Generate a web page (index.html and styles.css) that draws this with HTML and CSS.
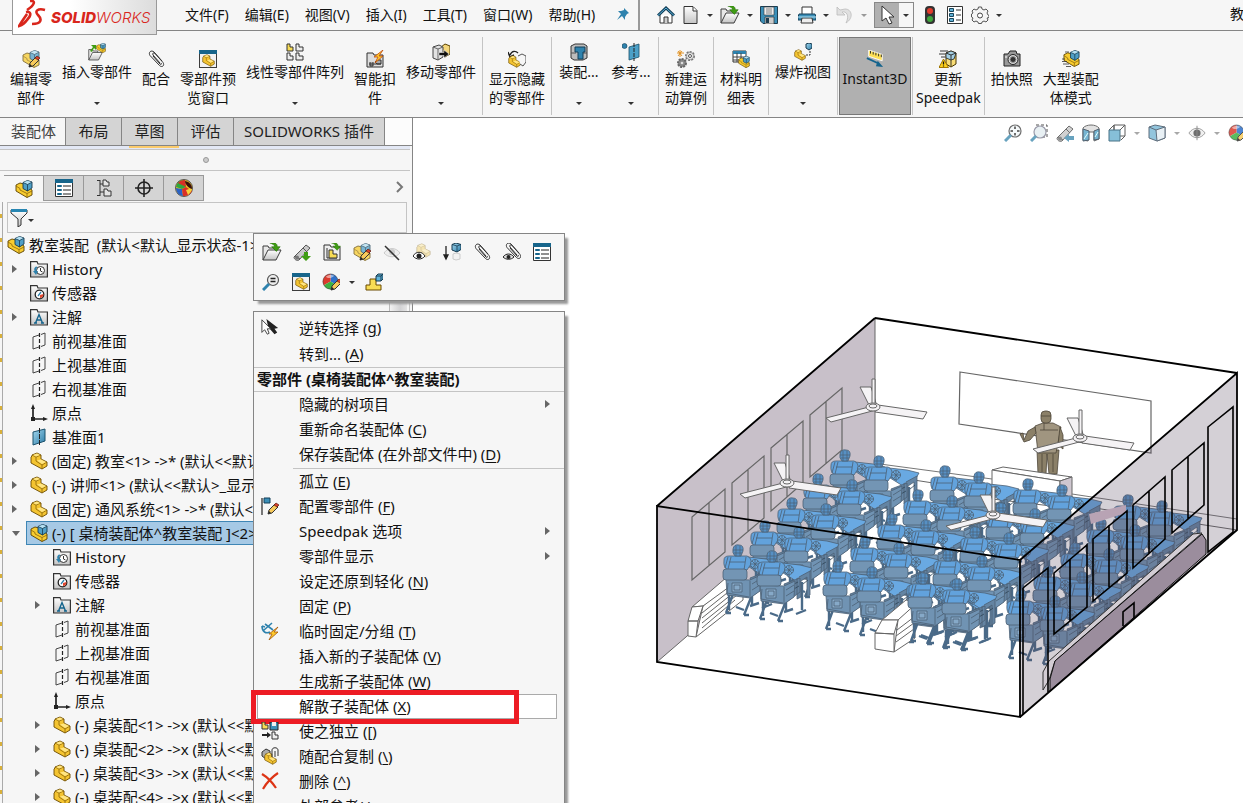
FILE: index.html
```
<!DOCTYPE html>
<html lang="zh-CN">
<head>
<meta charset="utf-8">
<title>SOLIDWORKS</title>
<link rel="stylesheet" href="styles.css">
</head>
<body>
<svg class="defs" aria-hidden="true">
  <defs>
    <linearGradient id="gBlue" x1="0" y1="0" x2="1" y2="1"><stop offset="0" stop-color="#a5d9f0"/><stop offset="1" stop-color="#2a7ba6"/></linearGradient>
    <linearGradient id="gGrey" x1="0" y1="0" x2="0" y2="1"><stop offset="0" stop-color="#fff"/><stop offset="1" stop-color="#c4c4c4"/></linearGradient>
  </defs>
  <symbol id="part" viewBox="0 0 18 18"><path d="M1 5 2 4V3l5-2 4 2v4l6 3v4l-5 3L1 11z" fill="#f4c431" stroke="#6b4b00" stroke-width=".9"/><path d="M2 3l4 2 5-2M6 5v4l6 4 5-3M12 13v4" fill="none" stroke="#8a6508" stroke-width=".8"/><path d="M3 3l4-1.500L10 3 6 4.500zM7 8.500l4-1 5 2.500-4 2z" fill="#ffe583"/></symbol>
  <symbol id="asm" viewBox="0 0 18 18"><path d="M1 7V5l4-2 4 1 8 6v5l-5 2.500L1 11z" fill="#f8cc2f" stroke="#5b4200" stroke-width=".9"/><path d="M1 6l4 2.500V10l7 3.500v4M12 13.500l5-2.500" fill="none" stroke="#8a6508" stroke-width=".8"/><path d="M8 2.500 12.500.5 17 2v6l-4.500 3L8 8.500z" fill="#4f9fc6" stroke="#173b50" stroke-width=".9"/><path d="M8 2.500 12.500.8 17 2.200 12.500 4.500z" fill="#b5e0f2"/><path d="M8 2.500l4.500 2 4.500-2.300M12.500 4.500V11" fill="none" stroke="#173b50" stroke-width=".8"/></symbol>
  <symbol id="pencil" viewBox="0 0 18 18"><path d="M7 17l1-4 6-6 3 3-6 6z" fill="#f7c95a" stroke="#333"/><path d="M13 8l2-2 3 2-2 2z" fill="#d8412c" stroke="#5a1b10" stroke-width=".7"/><path d="M7 17l1-3 2 2z" fill="#222"/></symbol>
  <symbol id="editasm" viewBox="0 0 18 18"><g opacity=".75"><use href="#asm"/></g><use href="#pencil"/></symbol>
  <symbol id="greenarrow" viewBox="0 0 18 18"><path d="M4 1c4-1 8 0 8 4h3l-4 5-5-5h3c0-2-2-3-5-4z" fill="#3f9d13" stroke="#226a05" stroke-width=".6"/></symbol>
  <symbol id="folder" viewBox="0 0 20 18"><path d="M1 17V3h5l1 2h6v4" fill="#e8e8e8" stroke="#3c3c3c"/><path d="M1 17 6 7h13l-5 10z" fill="url(#gGrey)" stroke="#3c3c3c"/></symbol>
  <symbol id="open" viewBox="0 0 20 18"><use href="#folder" width="20" height="18"/><use href="#greenarrow" x="4" width="17" height="17" y="-1"/></symbol>
  <symbol id="insert" viewBox="0 0 18 18"><use href="#folder" x="0" y="4" width="15" height="14"/><use href="#asm" x="8" y="0" width="10" height="10"/><path d="M2 8 5 4 3 2h5v5L6 5 4 9z" fill="#3f9d13"/></symbol>
  <symbol id="clip" viewBox="0 0 18 18"><path d="M13 13 6 5C5 3 7 2 8.500 4l7.500 8.500c2 3-1 5.500-3.500 3L3 5.500C1 2.500 4-.5 7 2l8 9M6 6l7 8c1 1 2 0 1-1" fill="none" stroke="#333"/></symbol>
  <symbol id="window" viewBox="0 0 18 18"><rect x=".5" y=".5" width="17" height="17" fill="#f2f2f2" stroke="#3c3c3c"/><path d="M0 0h18v4H0z" fill="#17658b"/><use href="#part" x="3" y="4" width="13" height="13"/></symbol>
  <symbol id="pattern" viewBox="0 0 18 18"><g fill="#eee" stroke="#333"><path d="M1 1h3v3h3v4H1z" fill="#f8dc55"/><path d="M10 1h3v3h4v4h-7zM1 10h3v3h3v4H1zM10 10h3v3h4v4h-7z"/></g></symbol>
  <symbol id="smart" viewBox="0 0 18 18"><path d="M1 17V3h6l1 2h9v12z" fill="#ddd" stroke="#333"/><path d="M3 14h12M4 12v4h3v-4M9 12l2-2h4v4h-4z" fill="#aaa" stroke="#333"/><path d="M17 0 8 7h4l-3 6 8-7h-4z" fill="#ffca2b" stroke="#c24a0a" stroke-width=".8"/></symbol>
  <symbol id="move" viewBox="0 0 18 18"><path d="M9 4l4-3 5 2v8l-5 3z" fill="#f4d67a" stroke="#5b4200"/><path d="M1 4l6-2 4 2v10l-5 3-5-2z" fill="#e2e2e2" stroke="#444"/><path d="M1 4l5 2 5-2M6 6v11" fill="none" stroke="#666"/><path d="M7 9.500h5V7l5 4-5 4v-2.500H7z" fill="#111" stroke="#fff" stroke-width=".5"/></symbol>
  <symbol id="showhide" viewBox="0 0 18 18"><path d="M2 5c2-5 6-4 8-2M0 2l2 5 4-2" fill="none" stroke="#222" stroke-width="1.400"/><use href="#part" x="0" y="5" width="13" height="13"/><path d="M10 6l4-2 4 2v6l-3 4-3-2" fill="#f6f6f6" stroke="#555"/></symbol>
  <symbol id="feature" viewBox="0 0 18 18"><path d="M1 3l4-2h9l3 2v12l-4 2H4l-3-2z" fill="#bcbcbc" stroke="#333"/><path d="M1 10h5M12 10h5" stroke="#555"/><path d="M5 4h10v5h-2v7H8V9H5z" fill="#2e82ad" stroke="#123f58"/></symbol>
  <symbol id="refgeo" viewBox="0 0 18 18"><circle cx="2.500" cy="3" r="2.500" fill="#2e82ad" stroke="#123f58" stroke-width=".6"/><path d="M7 4l10-3v13L7 17z" fill="#4ba0c8" stroke="#1b506b" stroke-width=".8"/><path d="M12 0v18" stroke="#222" stroke-dasharray="4 1"/></symbol>
  <symbol id="gears" viewBox="0 0 18 18"><circle cx="13" cy="6" r="4" fill="#eee" stroke="#777" stroke-dasharray="2 1" stroke-width="2"/><circle cx="13" cy="6" r="3.500" fill="#eee" stroke="#777" stroke-width=".6"/><circle cx="13" cy="6" r="1.500" fill="#fff" stroke="#555"/><circle cx="5" cy="13" r="4" fill="#888" stroke="#666" stroke-dasharray="2 1" stroke-width="2"/><circle cx="5" cy="13" r="1.300" fill="#ddd"/><path d="M3 0v7M0 3h7M1 1l4 5M5 1 1 6" stroke="#e08a12" stroke-width=".9"/></symbol>
  <symbol id="bom" viewBox="0 0 18 18"><path d="M1 1h13v11H1z" fill="#fff" stroke="#333"/><path d="M1 1h13v3H1z" fill="#2e82ad"/><path d="M1 7h13M1 10h13M5 3v9M9 3v9" stroke="#444"/><use href="#asm" x="6" y="6" width="12" height="12"/></symbol>
  <symbol id="explode" viewBox="0 0 18 18"><use href="#part" x="0" y="6" width="12" height="12"/><path d="M12 1l3-1 3 1v4l-3 2-3-2z" fill="url(#gBlue)" stroke="#173b50"/><path d="M16 8v4h-4" stroke="#333" stroke-dasharray="2 1" fill="none"/></symbol>
  <symbol id="ruler" viewBox="0 0 20 20"><path d="M3 0l15 5v7L3 7z" fill="#ffe056" stroke="#fff"/><path d="M5 1v3M8 2v3M11 3v3M14 4v3M17 5v3" stroke="#222"/><path d="M1 9l13 6" stroke="#15648d" stroke-width="2"/><path d="M13 12l6 7-8-1z" fill="#15648d"/></symbol>
  <symbol id="speedpak" viewBox="0 0 18 18"><path d="M7 3l5-2 5 2v11l-5 3-5-3z" fill="#f8dc75" stroke="#443200"/><path d="M7 3l5-2 5 2-2 6-3 1-5-2z" fill="#a5d0e4" stroke="#222" stroke-width=".8"/><path d="M12 5v11M7 3l5 2 5-2M1 1h8M0 4h6M2 7h4" stroke="#222" fill="none" stroke-width=".9"/><path d="M0 17.500 4.500 9l5 8.500z" fill="#ffd21c" stroke="#a07600"/><path d="M4.500 11.500v3M4.500 15.500v1" stroke="#111" stroke-width="1.300"/></symbol>
  <symbol id="camera" viewBox="0 0 18 18"><path d="M1 4h4l2-3h6l1 3h3v12H1z" fill="#999" stroke="#222"/><circle cx="10" cy="9.500" r="5" fill="#ddd" stroke="#222"/><circle cx="10" cy="9.500" r="3" fill="#333" stroke="#999"/><path d="M2 7h2" stroke="#fff"/></symbol>
  <symbol id="largeasm" viewBox="0 0 18 18"><use href="#asm" x="1" width="17" height="17"/><path d="M0 9h3M0 11.500h5M1 14h6M4 16.500h5M3 2h4" stroke="#333" stroke-width=".8"/></symbol>
  <symbol id="history" viewBox="0 0 18 18"><path d="M.6 17V1.600H7L8 4h9.400v13z" fill="url(#gGrey)" stroke="#333" stroke-width="1.200"/><circle cx="10.500" cy="10.500" r="4" fill="#fff" stroke="#333"/><path d="M10.500 8v3l2 1" fill="none" stroke="#333"/><path d="M6 6.500c-2 1-2 3-1.500 4.500H3l3 4 2-4H6.500c-.5-2 0-3 1-4z" fill="#2e82ad"/></symbol>
  <symbol id="sensor" viewBox="0 0 18 18"><path d="M.6 17V1.600H7L8 4h9.400v13z" fill="url(#gGrey)" stroke="#333" stroke-width="1.200"/><circle cx="9.500" cy="10.500" r="4.300" fill="#fff" stroke="#222" stroke-width="1.300"/><path d="M8 12l3-4" stroke="#2e82ad" fill="none" stroke-width="1.300"/><path d="M10 11l3.500-1c0 2-1 4-3.500 4z" fill="#e0472f"/></symbol>
  <symbol id="note" viewBox="0 0 18 18"><path d="M.6 17V1.600H7L8 4h9.400v13z" fill="url(#gGrey)" stroke="#333" stroke-width="1.200"/><path d="M5.500 15 9 6.500l3.500 8.500M7 12h4.500M4 15h3M11 15h3" fill="none" stroke="#15648d" stroke-width="1.400"/></symbol>
  <symbol id="plane" viewBox="0 0 18 18"><path d="M9 3 3 5v12l6-2M11 2.500 15 1v12l-4 1.500" fill="none" stroke="#444"/><path d="M9.500 1v17" stroke="#222" stroke-width="1.200" stroke-dasharray="4 2"/></symbol>
  <symbol id="plane1" viewBox="0 0 18 18"><path d="M3 4l12-3v12L3 17z" fill="url(#gBlue)" stroke="#1b506b"/><path d="M9.500 0v18" stroke="#222" stroke-dasharray="5 1"/></symbol>
  <symbol id="origin" viewBox="0 0 18 18"><path d="M3 3v12h11" fill="none" stroke="#222" stroke-width="1.700"/><path d="M3 0l2 5H1zM18 15l-5 2v-4zM1 13h4v4H1z" fill="#222"/></symbol>
  <symbol id="list" viewBox="0 0 18 18"><path d="M.500.500h17v17H.500z" fill="#fff" stroke="#333"/><path d="M0 0h18v4H0z" fill="#17658b"/><path d="M2.500 6.500h4v1h-4zM2.500 10.500h4v1h-4zM2.500 14.500h4v1h-4z" fill="#9dd" stroke="#17658b"/><path d="M8 7h8M8 11h8M8 15h8" stroke="#222" stroke-width="1.100"/></symbol>
  <symbol id="options" viewBox="0 0 18 18"><path d="M1.500.5h15v17h-15z" fill="#fff" stroke="#333"/><path d="M3.500 2.500h4v3h-4zM3.500 7.500h4v3h-4zM3.500 12.500h4v3h-4z" fill="#5fb0d6" stroke="#17455b"/><path d="M10 4h5M10 9h5M10 14h5" stroke="#333"/></symbol>
  <symbol id="config" viewBox="0 0 18 18"><path d="M5 1v16M5 1.500H2M5 16.500H2M5 5h4M5 13h4" stroke="#333" fill="none"/><path d="M8 1h3l1 2h2v4H8zM9 10h3l1 2h3v5H9z" fill="#e4e4e4" stroke="#333"/></symbol>
  <symbol id="target" viewBox="0 0 18 18"><circle cx="9" cy="9" r="6" fill="none" stroke="#222" stroke-width="1.600"/><path d="M9 0v18M0 9h18" stroke="#222" stroke-width="1.600"/></symbol>
  <symbol id="ball" viewBox="0 0 18 18"><path d="M9 9V1a8 8 0 0 1 7 12z" fill="#2f70c9"/><path d="M9 9V1a8 8 0 0 0-7 12z" fill="#db3b2e"/><path d="M9 9l7 4a8 8 0 0 1-14 0z" fill="#3db144"/><path d="M4 4c3-3 7-2 9-1-3 3-7 3-9 1z" fill="#fff" opacity=".5"/><circle cx="9" cy="9" r="8" fill="none" stroke="#444" stroke-width=".6"/></symbol>
  <symbol id="display" viewBox="0 0 18 18"><circle cx="9" cy="9" r="8.500" fill="#f2c521" stroke="#555"/><path d="M1 8a8 8 0 0 1 8-7l2 7-4 2z" fill="#2fa83c"/><path d="M3 4a8 8 0 0 1 7-3l1 7z" fill="#d92f25"/><path d="M1 9l6 1 1 7c-4 0-7-4-7-8z" fill="#2a62c4"/><path d="M7 10l4-2 6 4c-2 4-5 5-9 5z" fill="#d92f25"/><path d="M11 11l6-2c0 3-2 5-4 7z" fill="#f6d13a"/><path d="M10 2c5 1 7 4 7 8-4-1-7-5-7-8z" fill="#3a0f0c"/></symbol>
  <symbol id="appear" viewBox="0 0 18 18"><use href="#ball" width="17" height="17"/><use href="#pencil" x="2"/></symbol>
  <symbol id="filter" viewBox="0 0 18 18"><path d="M1 1h16v3l-6 6v6l-3 2v-8L1 4z" fill="url(#gGrey)" stroke="#333"/><path d="M1 0h16v3H1z" fill="#2886b2"/></symbol>
  <symbol id="rcube" viewBox="0 0 18 18"><path d="M1 3l6-2 10 2v11l-8 3-8-3z" fill="#7fbcd8" stroke="#456"/><path d="M8 6l9-3v11l-8 3z" fill="#e4eef4" stroke="#456"/><path d="M1 3l7 3" stroke="#456"/></symbol>
  <symbol id="home" viewBox="0 0 18 18"><path d="M3 9v8h12V9" fill="#fff" stroke="#333"/><path d="M7 17v-6h4v6" fill="#ccc" stroke="#333"/><path d="M1 9.500 9 2l8 7.500" fill="none" stroke="#123f58" stroke-width="3"/><path d="M1 9.500 9 2l8 7.500" fill="none" stroke="#5cb0d8"/></symbol>
  <symbol id="new" viewBox="0 0 18 18"><path d="M2 .5h9l4 4v13H2z" fill="url(#gGrey)" stroke="#333"/><path d="M11 1v4h4" fill="#fff" stroke="#333"/></symbol>
  <symbol id="save" viewBox="0 0 18 18"><path d="M.5.5h17v17H3L.5 15z" fill="#3b8fb8" stroke="#1e3e50"/><path d="M4 1h10v8H4z" fill="#eee" stroke="#333" stroke-width=".6"/><path d="M6 3h6M6 5h6M6 7h6" stroke="#555" stroke-width=".7"/><path d="M5 11h9v7H5z" fill="#ccc" stroke="#333" stroke-width=".7"/><path d="M6 12h3v5H6z" fill="#1e3e50"/></symbol>
  <symbol id="print" viewBox="0 0 18 18"><path d="M4 8V1h10v7" fill="#fff" stroke="#333"/><path d="M1 8h16l1 3v3H0v-3z" fill="#3b8fb8" stroke="#123f58"/><path d="M4 12h10l1 5H3z" fill="#eee" stroke="#333"/><path d="M0 11h18" stroke="#b8e0f0"/></symbol>
  <symbol id="undo" viewBox="0 0 18 18"><path d="M1 1v8h8L6 6c4-1 8 3 4 11 8-5 6-14-1-14L4 4z" fill="#e0e0e0" stroke="#bbb" stroke-width=".8"/></symbol>
  <symbol id="cursor" viewBox="0 0 18 20"><path d="M4 1v15l4-3 3 6 3-1-3-6h5z" fill="#fff" stroke="#333"/></symbol>
  <symbol id="light" viewBox="0 0 18 18"><rect x="4" y="0" width="10" height="18" rx="4" fill="#333"/><circle cx="9" cy="5" r="3" fill="#e23b2c"/><circle cx="9" cy="13" r="3" fill="#3fa63c"/></symbol>
  <symbol id="cog" viewBox="0 0 18 18"><path d="M7.500 1h3l.5 2 2 1 2-1 2 2-1 2 1 2 1 .5v2L16 12l1 2-2 2-2-1-2 1-.5 1.500h-3L7 16l-2-1-2 1-2-2 1-2-1.500-1V8L2 7 1 5l2-2 2 1 2-1z" fill="#f4f4f4" stroke="#555"/><circle cx="9" cy="9.500" r="2.500" fill="#fff" stroke="#444"/></symbol>
  <symbol id="pin" viewBox="0 0 14 14"><path d="M8 1l5 5-2 1-2 3v3L6 9l-5 4 4-6-3-3h3l3-1z" fill="#2e82ad"/></symbol>
  <symbol id="zoomfit" viewBox="0 0 18 18"><circle cx="11" cy="7" r="6" fill="#f4f8fa" stroke="#555" stroke-width="1.200"/><path d="M7 11l-6 6" stroke="#4e93b5" stroke-width="3"/><path d="M11 2.500v2.500M11 9v2.500M6.500 7H9M13 7h2.500" stroke="#222" stroke-width="1.500"/></symbol>
  <symbol id="zoomarea" viewBox="0 0 18 18"><path d="M6 1h11v12h-4" fill="none" stroke="#333" stroke-dasharray="3 2"/><circle cx="10" cy="8" r="6" fill="#e4eef2" stroke="#889" stroke-width="1.200"/><path d="M6 12l-5 5" stroke="#4e93b5" stroke-width="3"/></symbol>
  <symbol id="scope" viewBox="0 0 18 18"><path d="M1 14 13 2l4 3L6 17c-3 1-5-1-5-3z" fill="#c9c9c9" stroke="#555"/><path d="M2 13l5 3M10 5l4 4" stroke="#555"/><circle cx="4" cy="14.500" r="2" fill="#777"/></symbol>
  <symbol id="prev" viewBox="0 0 18 18"><use href="#scope"/><path d="M8 14l5-4v2h5v4h-5v2z" fill="#4e93b5"/></symbol>
  <symbol id="goscope" viewBox="0 0 18 18"><use href="#scope"/><path d="M11 9h4v4h3l-5 5-5-5h3z" fill="#3f9d13"/></symbol>
  <symbol id="section" viewBox="0 0 18 18"><path d="M1 4c3-4 13-4 16 0v11l-5 2V8H6v9l-5-1z" fill="#ddd" stroke="#555"/><path d="M1 5l6 2v9l-6 1zM17 5l-5 2v9l5-1z" fill="#5fa9cb" stroke="#345"/><path d="M2 15l4-6M13 13l3-5" stroke="#dff"/></symbol>
  <symbol id="orient" viewBox="0 0 18 18"><path d="M6 1h11v11l-4 4M6 6V1l-5 5M17 1l-5 5M6 1v8M12 12h5" fill="none" stroke="#444"/><path d="M1 6h11v11H1z" fill="#72b5d2" stroke="#2a5a72"/></symbol>
  <symbol id="eye" viewBox="0 0 20 18"><path d="M1 9c5-7 13-7 18 0-5 7-13 7-18 0z" fill="#eee" stroke="#888"/><circle cx="10" cy="9" r="4" fill="#555"/><path d="M10 1v16" stroke="#777"/></symbol>
  <symbol id="eyehide" viewBox="0 0 18 18"><path d="M1 10c4-6 12-6 16 0-4 5-12 5-16 0z" fill="#eee" stroke="#ccc"/><circle cx="9" cy="9" r="3" fill="#ccc"/><path d="M2 3l14 14" stroke="#333" stroke-width="1.500"/></symbol>
  <symbol id="ghost" viewBox="0 0 18 18"><g opacity=".35"><use href="#part" x="3" width="15" height="15"/></g><path d="M0 13c3-5 9-5 12 0-3 4-9 4-12 0z" fill="#fff" stroke="#222"/><circle cx="6" cy="13" r="2.500" fill="#222"/></symbol>
  <symbol id="suppress" viewBox="0 0 18 18"><path d="M3 3v12M1 12l2 4 2-4z" stroke="#222" fill="#222" stroke-width="1.300"/><path d="M9 1.500 13 0l5 1.500v5L14 9 9 7z" fill="url(#gBlue)" stroke="#173b50"/><path d="M9 1.500 14 3l4-1.500M14 3v6" stroke="#173b50" fill="none" stroke-width=".8"/><path d="M10 11l3-1 4 1v5l-4 1-3-1z" fill="#f2f2f2" stroke="#ccc"/></symbol>
  <symbol id="clipeye" viewBox="0 0 18 18"><use href="#clip" x="1" y="-1"/><path d="M0 14c3-4 8-4 11 0-3 3-8 3-11 0z" fill="#ddd" stroke="#222"/><circle cx="5.500" cy="14" r="2" fill="#222"/></symbol>
  <symbol id="copywin" viewBox="0 0 18 18"><path d="M1 2h6l1 2h9v13H1z" fill="#eee" stroke="#333"/><path d="M4 5v10h10" fill="none" stroke="#333"/><path d="M6 7h4v4h4v4H6z" fill="#f8dc55" stroke="#333"/><use href="#greenarrow" x="5" width="15" height="15" y="-1"/></symbol>
  <symbol id="lens" viewBox="0 0 18 18"><circle cx="11" cy="7" r="5.500" fill="#eee" stroke="#555" stroke-width="1.200"/><path d="M7 11l-6 6" stroke="#2e82ad" stroke-width="3"/><path d="M8.500 5.500h5M8.500 8.500h5" stroke="#222" stroke-width="1.500"/></symbol>
  <symbol id="tree3" viewBox="0 0 18 18"><path d="M1 17v-5h4V6h6v6h5v5z" fill="#f8dc55" stroke="#6b4b00"/><path d="M11 3l2-2h5v5l-2 2h-5z" fill="#5fb4da" stroke="#173b50"/><path d="M11 3h5v5M16 3l2-2" fill="none" stroke="#173b50"/></symbol>
  <symbol id="cursors" viewBox="0 0 20 18"><path d="M6 0l13 10-4 1 3 4-3 2-7-8z" fill="#222"/><path d="M1 1v14l3-3 3 5 2-1-2-5h4z" fill="#fff" stroke="#333"/></symbol>
  <symbol id="flag" viewBox="0 0 18 18"><path d="M1 1v17" stroke="#222" stroke-width="1.200"/><path d="M3 1h6v5H3z" fill="#3b8fb8" stroke="#123f58"/><use href="#pencil"/></symbol>
  <symbol id="anchor" viewBox="0 0 18 18"><path d="M1 4c0 6 4 8 8 6M3 8l8-7M1 4l3 1M4 2l8 6" fill="none" stroke="#2e82ad" stroke-width="1.600"/><path d="M17 5 8 12h3l-3 6 9-8h-4z" fill="#ffca2b" stroke="#a55608" stroke-width=".8"/></symbol>
  <symbol id="indep" viewBox="0 0 18 18"><path d="M1 0h3v3h3v4H1z" fill="#f8dc55" stroke="#333"/><path d="M9 0h8v8H9z" fill="#3b8fb8" stroke="#222"/><path d="M11 0h4v4h-4z" fill="#eee"/><path d="M1 13h7" stroke="#222" stroke-width="2"/><path d="M6 10l4 3-4 3z" fill="#222"/><path d="M11 10h3v3h3v4h-6z" fill="#eee" stroke="#333"/></symbol>
  <symbol id="copymate" viewBox="0 0 18 18"><path d="M1 5l4-3 4 2v6l-4 2-4-3z" fill="#aaa" stroke="#333"/><use href="#part" x="3" y="5" width="13" height="13"/><path d="M11 10V3c0-3 6-3 6 0v6M14 10V4" fill="none" stroke="#333"/></symbol>
  <symbol id="del" viewBox="0 0 18 18"><path d="M1 2c5 3 10 8 14 14M17 1C11 5 6 10 2 17" fill="none" stroke="#dd3415" stroke-width="2.200"/></symbol>
</svg>

<header class="titlebar">
  <div class="logo">
    <svg class="ds" viewBox="0 0 28 28" aria-hidden="true"><path d="M12 1c6-1 5 4-3 9M8 12c5-1 6 3 1 8-2 3-5 5-8 6 3-5 6-9 8-12M27 10c-7-2-11 1-7 5 4 4 4 9-6 9" fill="none" stroke="#d9261c" stroke-width="2.600"/></svg>
    <span class="word"><b>SOLID</b>WORKS</span>
  </div>
  <nav class="menubar">
    <button>文件(F)</button><button>编辑(E)</button><button>视图(V)</button><button>插入(I)</button><button>工具(T)</button><button>窗口(W)</button><button>帮助(H)</button>
    <svg class="pin"><use href="#pin"/></svg>
  </nav>
  <div class="quick">
    <button aria-label="主页"><svg class="ic"><use href="#home"/></svg></button>
    <button aria-label="新建"><svg class="ic"><use href="#new"/></svg><i class="caret"></i></button>
    <button aria-label="打开"><svg class="ic wide"><use href="#open"/></svg><i class="caret"></i></button>
    <button aria-label="保存"><svg class="ic"><use href="#save"/></svg><i class="caret"></i></button>
    <button aria-label="打印"><svg class="ic"><use href="#print"/></svg><i class="caret"></i></button>
    <button aria-label="撤销"><svg class="ic"><use href="#undo"/></svg><i class="caret dim"></i></button>
    <button class="select" aria-label="选择"><span><svg class="ic tall"><use href="#cursor"/></svg></span><i class="caret"></i></button>
    <button aria-label="重建"><svg class="ic"><use href="#light"/></svg></button>
    <button aria-label="属性"><svg class="ic"><use href="#options"/></svg></button>
    <button aria-label="选项"><svg class="ic"><use href="#cog"/></svg><i class="caret"></i></button>
  </div>
  <span class="doc">教</span>
</header>

<div class="ribbon">
  <button class="cmd"><svg class="ic"><use href="#editasm"/></svg><span>编辑零<br>部件</span></button>
  <button class="cmd drop"><svg class="ic"><use href="#insert"/></svg><span>插入零部件</span><i class="caret"></i></button>
  <button class="cmd"><svg class="ic"><use href="#clip"/></svg><span>配合</span></button>
  <button class="cmd"><svg class="ic"><use href="#window"/></svg><span>零部件预<br>览窗口</span></button>
  <button class="cmd drop"><svg class="ic"><use href="#pattern"/></svg><span>线性零部件阵列</span><i class="caret"></i></button>
  <button class="cmd"><svg class="ic"><use href="#smart"/></svg><span>智能扣<br>件</span></button>
  <button class="cmd drop"><svg class="ic"><use href="#move"/></svg><span>移动零部件</span><i class="caret"></i></button>
  <hr>
  <button class="cmd"><svg class="ic"><use href="#showhide"/></svg><span>显示隐藏<br>的零部件</span></button>
  <hr>
  <button class="cmd drop short"><svg class="ic"><use href="#feature"/></svg><span>装配...</span><i class="caret"></i></button>
  <button class="cmd drop short"><svg class="ic"><use href="#refgeo"/></svg><span>参考...</span><i class="caret"></i></button>
  <hr>
  <button class="cmd"><svg class="ic"><use href="#gears"/></svg><span>新建运<br>动算例</span></button>
  <hr>
  <button class="cmd"><svg class="ic"><use href="#bom"/></svg><span>材料明<br>细表</span></button>
  <hr>
  <button class="cmd drop"><svg class="ic"><use href="#explode"/></svg><span>爆炸视图</span><i class="caret"></i></button>
  <hr>
  <button class="cmd on"><svg class="ic"><use href="#ruler"/></svg><span>Instant3D</span></button>
  <hr>
  <button class="cmd tight"><svg class="ic"><use href="#speedpak"/></svg><span>更新<br>Speedpak</span></button>
  <hr>
  <button class="cmd"><svg class="ic"><use href="#camera"/></svg><span>拍快照</span></button>
  <button class="cmd"><svg class="ic"><use href="#largeasm"/></svg><span>大型装配<br>体模式</span></button>
</div>

<div class="work">
  <aside class="side">
    <div class="tabs">
      <button class="cur">装配体</button><button>布局</button><button>草图</button><button>评估</button><button>SOLIDWORKS 插件</button>
    </div>
    <div class="strip"><span></span></div>
    <div class="grip"><span></span></div>
    <div class="ptabs">
      <button class="cur" aria-label="设计树"><svg class="ic"><use href="#asm"/></svg></button>
      <button aria-label="属性"><svg class="ic"><use href="#list"/></svg></button>
      <button aria-label="配置"><svg class="ic"><use href="#config"/></svg></button>
      <button aria-label="尺寸"><svg class="ic"><use href="#target"/></svg></button>
      <button aria-label="外观"><svg class="ic"><use href="#display"/></svg></button>
      <svg class="more" viewBox="0 0 8 12"><path d="M1 1l5 5-5 5" fill="none" stroke="#777" stroke-width="2"/></svg>
    </div>
    <div class="treewrap">
      <div class="edge"></div>
      <div class="treecol">
        <div class="filter"><svg class="ic"><use href="#filter"/></svg><i class="caret"></i></div>
        <div class="treebox">
        <ul class="tree">
          <li class="root"><svg class="ic"><use href="#asm"/></svg>教室装配&nbsp; (默认&lt;默认_显示状态-1&gt;)</li>
          <li><i class="tw"></i><svg class="ic"><use href="#history"/></svg>History</li>
          <li><svg class="ic"><use href="#sensor"/></svg>传感器</li>
          <li><i class="tw"></i><svg class="ic"><use href="#note"/></svg>注解</li>
          <li><svg class="ic"><use href="#plane"/></svg>前视基准面</li>
          <li><svg class="ic"><use href="#plane"/></svg>上视基准面</li>
          <li><svg class="ic"><use href="#plane"/></svg>右视基准面</li>
          <li><svg class="ic"><use href="#origin"/></svg>原点</li>
          <li><svg class="ic"><use href="#plane1"/></svg>基准面1</li>
          <li><i class="tw"></i><svg class="ic"><use href="#part"/></svg>(固定) 教室&lt;1&gt; -&gt;* (默认&lt;&lt;默认&gt;</li>
          <li><i class="tw"></i><svg class="ic"><use href="#part"/></svg>(-) 讲师&lt;1&gt; (默认&lt;&lt;默认&gt;_显示</li>
          <li><i class="tw"></i><svg class="ic"><use href="#part"/></svg>(固定) 通风系统&lt;1&gt; -&gt;* (默认&lt;</li>
          <li class="sel"><i class="tw open"></i><span><svg class="ic"><use href="#asm"/></svg>(-) [ 桌椅装配体^教室装配 ]&lt;2&gt;</span></li>
          <li class="sub"><svg class="ic"><use href="#history"/></svg>History</li>
          <li class="sub"><svg class="ic"><use href="#sensor"/></svg>传感器</li>
          <li class="sub"><i class="tw"></i><svg class="ic"><use href="#note"/></svg>注解</li>
          <li class="sub"><svg class="ic"><use href="#plane"/></svg>前视基准面</li>
          <li class="sub"><svg class="ic"><use href="#plane"/></svg>上视基准面</li>
          <li class="sub"><svg class="ic"><use href="#plane"/></svg>右视基准面</li>
          <li class="sub"><svg class="ic"><use href="#origin"/></svg>原点</li>
          <li class="sub"><i class="tw"></i><svg class="ic"><use href="#part"/></svg>(-) 桌装配&lt;1&gt; -&gt;x (默认&lt;&lt;默认</li>
          <li class="sub"><i class="tw"></i><svg class="ic"><use href="#part"/></svg>(-) 桌装配&lt;2&gt; -&gt;x (默认&lt;&lt;默认</li>
          <li class="sub"><i class="tw"></i><svg class="ic"><use href="#part"/></svg>(-) 桌装配&lt;3&gt; -&gt;x (默认&lt;&lt;默认</li>
          <li class="sub"><i class="tw"></i><svg class="ic"><use href="#part"/></svg>(-) 桌装配&lt;4&gt; -&gt;x (默认&lt;&lt;默认</li>
        </ul>
        <div class="scrollbar"></div>
        </div>
      </div>
    </div>
  </aside>

  <main class="view">
    <div class="hud">
      <svg class="ic"><use href="#zoomfit"/></svg><svg class="ic"><use href="#zoomarea"/></svg><svg class="ic"><use href="#prev"/></svg><svg class="ic"><use href="#section"/></svg><svg class="ic"><use href="#orient"/></svg><i class="caret dim"></i><svg class="ic"><use href="#rcube"/></svg><i class="caret dim"></i><svg class="ic"><use href="#eye"/></svg><i class="caret dim"></i><svg class="ic"><use href="#appear"/></svg>
    </div>
    <svg class="scene" viewBox="413 148 830 655" preserveAspectRatio="xMinYMin meet" role="img" aria-label="教室模型">
      <symbol id="stu" overflow="visible">
        <g stroke="#4b6073" stroke-width=".8" stroke-linejoin="round">
          <path d="M-9 42v16M14 42v12M30 24v28M-12 61l7-19M-12 61h5M6 63l8-20M6 63h5M12 54l9-3M24 56l10-4M-2 55l8 3" stroke="#4a6a88" stroke-width="2.400" fill="none"/>
          <path d="M10 5l18 2 12 3-4 7-12 6L8 13z" fill="#69a9e2"/>
          <path d="M27 19l11-6v24l-3 2V19l-6 4v16l-4 2V20M12 26l16-6v14l-12 9z" fill="#6484a2"/>
          <path d="M14 30l12-6M15 35l12-7M31 26l5-4" fill="none" stroke="#2f4558"/>
          <path d="M-12 27l24 1 11-5-1 16-10 7-23-3z" fill="#7093b3"/>
          <path d="M12 29v16M-10 31l-1 10 22 4M14 32l8-5M14 38l8-5" fill="none"/>
          <path d="M-6 31h10v9H-6zM-4 33h6v5h-6z" fill="#86a9c8"/>
          <path d="M-14 8q0-4 5-4h18q5 2 4 8l-4 6h-19q-5-2-4-10z" fill="#62a2dc"/>
          <path d="M-10 5l-3 11M-7 5l-3 12M8 5l-2 13M-9 10h16" fill="none"/>
          <circle cx="17" cy="12" r="4.500" fill="#6aa8dd"/>
          <path d="M14 9l6 6M20 9l-5 6M12 14l6 4M13 12h9M17 8v8" fill="none"/>
          <rect x="-15" y="17" width="24" height="11" rx="3" fill="#7395b4"/>
          <path d="M-5-3q1-5 6-4 5 0 4 6l-2 5h-6q-3-3-2-7z" fill="#5690c4"/>
          <path d="M-5-2H5M-2-6v10M2-6v10M-4 1h8" fill="none" stroke-width=".7"/>
        </g>
      </symbol>
      <symbol id="pair" overflow="visible"><use href="#stu"/><use href="#stu" x="34" y="6"/></symbol>
      <symbol id="row5" overflow="visible"><use href="#pair"/><use href="#pair" x="-27" y="24"/><use href="#pair" x="-53" y="48"/><use href="#pair" x="-80" y="71"/><use href="#pair" x="-107" y="95"/></symbol>
      <symbol id="fan" overflow="visible"><g fill="#f5f3f5" stroke="#666" stroke-width="1"><path d="M-13-20h11l5 16-7 2zM5-2l49 7-4 7-48-7zM-4 0l-43 11 5 4 45-12z"/><path d="M-1-28h3v26h-3z"/><ellipse cx="0" cy="0" rx="7" ry="4"/><ellipse cx="0" cy="-1" rx="4" ry="2"/></g></symbol>

      <path d="M657 506 875 318v156L657 662z" fill="#c8c0c9"/>
      <path d="M875 318v156l362 56M657 662l218-188" fill="none" stroke="#666" stroke-width="1"/>
      <g fill="none" stroke="#666" stroke-width="1.200">
        <path d="M692 517l33-28v63l-33 28zM709 503v63M732 483l32-27v62l-32 27zM748 470v62M771 448l32-27v62l-32 28zM787 435v62M810 415l32-27v62l-32 27zM826 402v62"/>
        <path d="M960 372l191 29v52l-192-29z"/>
      </g>
      <g fill="#fff" stroke="#666" stroke-width="1">
        <path d="M703 606l40-34v28l-47 37z"/><path d="M692 607l35-30 13 2-37 27z"/><path d="M692 607l11-1-5 15h-10zM688 621h10l-2 16-8-1z"/>
        <path d="M702 613l35-28M702 618l35-28M702 623l35-28M702 628l33-28" fill="none"/>
      </g>
      <g stroke="#4c4538" stroke-width=".8" fill="#8b8068">
        <path d="M1037 450l1 24h8l1-20 2 20h8l2-24z"/><path d="M1035 426l8-3h10l8 4-5 26h-18z" fill="#a09580"/><path d="M1035 427l-7 4-4 9-1-7-3 1 4 8 6-2 6-7zM1060 427l3 8v14l-5-4z"/>
        <rect x="1041" y="411" width="10" height="12" rx="4"/><path d="M1041 416h10M1044 423v7M1040 430h18M1042 454v18M1053 454v18" fill="none"/>
      </g>
      <use href="#fan" x="873" y="407"/>
      <g fill="#fff" stroke="#666" stroke-width="1"><path d="M992 470l11-3 69 10-12 4z"/><path d="M992 470l68 11v26l-68-8z"/><path d="M1060 481l12-4v26l-12 4z" fill="#cfc7d0"/></g>
      <path d="M880 464l112 15M1072 494l165 25" stroke="#777" fill="none"/>
      <use href="#row5" x="845" y="457"/>
      <use href="#row5" x="945" y="473"/>
      <use href="#row5" x="1028" y="486"/>
      <g fill="#fff" stroke="#666" stroke-width="1"><path d="M898 620l17-18v36l-21 14z"/><path d="M882 620l24-20 12 2-20 18z"/><path d="M882 620h16l-4 14-19-1zM875 633l19 1v18l-19-3z"/><path d="M897 630l17-13M896 636l18-13M896 642l18-13" fill="none"/></g>
      <use href="#stu" x="923" y="580"/><use href="#stu" x="957" y="586"/>
      <use href="#row5" x="1128" y="502"/>
      <use href="#fan" x="787" y="483"/><use href="#fan" x="1080" y="438"/><use href="#fan" x="993" y="515"/>
      <path d="M1020 560l217-187v157l-217 187z" fill="#5a4a62" opacity=".26"/>
      <path d="M1089 514l37-9v8l-35 11z" fill="#b8a3b4"/>
      <path d="M1049 661l144-127 9-1-147 128-6 19-6 10v-18z" fill="#d3cdd4" stroke="#333"/>
      <path d="M1055 661l147-127 4 6v14l-156 137v-12z" fill="#9b8d9d" stroke="#111"/>
      <g fill="none" stroke="#000" stroke-width="1.600">
        <path d="M1208 427l25-20v125l-25 20zM1172 470l32-27v62l-32 28zM1188 457v62M1133 505l32-28v62l-32 29zM1149 491v62M1093 539l34-28v62l-34 28zM1109 525v62M1054 573l33-28v62l-33 27zM1070 559v62M1023 588l25-20v124M1023 588v126M1123 626v-14l11-9v15"/>
        <path d="M875 318l362 55M875 318 657 506M657 506v156l363 55V560zM1020 560l217-187v157l-217 187" stroke-width="1.800"/>
      </g>
    </svg>
  </main>
</div>

<div class="minibar">
  <div><svg class="ic wide"><use href="#open"/></svg><svg class="ic"><use href="#goscope"/></svg><svg class="ic"><use href="#copywin"/></svg><svg class="ic"><use href="#editasm"/></svg><svg class="ic"><use href="#eyehide"/></svg><svg class="ic"><use href="#ghost"/></svg><svg class="ic"><use href="#suppress"/></svg><svg class="ic"><use href="#clip"/></svg><svg class="ic"><use href="#clipeye"/></svg><svg class="ic"><use href="#list"/></svg></div>
  <div><svg class="ic"><use href="#lens"/></svg><svg class="ic"><use href="#window"/></svg><svg class="ic"><use href="#appear"/></svg><i class="caret"></i><svg class="ic"><use href="#tree3"/></svg></div>
</div>

<div class="menu">
  <button class="tall-row"><svg class="ic"><use href="#cursors"/></svg>逆转选择 (<u>g</u>)</button>
  <button class="tall-row">转到... (<u>A</u>)</button>
  <h2>零部件 (桌椅装配体^教室装配)</h2>
  <button>隐藏的树项目<i class="tw"></i></button>
  <button>重新命名装配体 (<u>C</u>)</button>
  <button>保存装配体 (在外部文件中) (<u>D</u>)</button>
  <hr>
  <button>孤立 (<u>E</u>)</button>
  <button><svg class="ic"><use href="#flag"/></svg>配置零部件 (<u>F</u>)</button>
  <button>Speedpak 选项<i class="tw"></i></button>
  <button>零部件显示<i class="tw"></i></button>
  <button>设定还原到轻化 (<u>N</u>)</button>
  <button>固定 (<u>P</u>)</button>
  <button><svg class="ic"><use href="#anchor"/></svg>临时固定/分组 (<u>T</u>)</button>
  <button>插入新的子装配体 (<u>V</u>)</button>
  <button>生成新子装配体 (<u>W</u>)</button>
  <button class="hot">解散子装配体 (<u>X</u>)<span class="mark"></span></button>
  <button><svg class="ic"><use href="#indep"/></svg>使之独立 (<u>[</u>)</button>
  <button><svg class="ic"><use href="#copymate"/></svg>随配合复制 (<u>\</u>)</button>
  <button><svg class="ic"><use href="#del"/></svg>删除 (<u>^</u>)</button>
  <button>外部参考(<u>.</u>)</button>
</div>
</body>
</html>
```
FILE: styles.css
```
* { box-sizing: border-box; }
body {
  margin: 0;
  height: 100vh;
  overflow: hidden;
  display: flex;
  flex-direction: column;
  position: relative;
  background: #fff;
  color: #111;
  font-family: "Noto Sans", "Noto Sans CJK SC", sans-serif;
  font-size: 15px;
}
button {
  border: 0;
  margin: 0;
  padding: 0;
  background: none;
  font: inherit;
  color: inherit;
}
.defs { position: absolute; width: 0; height: 0; }
.ic { width: 18px; height: 18px; flex: none; display: block; overflow: visible; }
.ic.wide { width: 20px; }
.ic.tall { height: 20px; }
.caret {
  flex: none;
  width: 0;
  height: 0;
  border: 3px solid transparent;
  border-top-color: #333;
  border-bottom: 0;
}
.caret.dim { border-top-color: #999; }

/* title bar */
.titlebar {
  flex: none;
  height: 31px;
  display: flex;
  align-items: stretch;
  background: #f6f6f6;
  border-bottom: 1px solid #858585;
}
.logo {
  width: 145px;
  height: 35px;
  margin-left: 12px;
  padding: 0 5px 7px;
  display: flex;
  align-items: center;
  gap: 5px;
  position: relative;
  border: 1px solid #999;
  border-top: 0;
  background: linear-gradient(90deg, #fff 40%, #dcdcdc);
}
.ds { width: 28px; height: 28px; flex: none; }
.word {
  padding-top: 9px;
  font: italic 300 15px/20px Inter, sans-serif;
  color: #d9261c;
}
.word b { font-weight: 800; }
.menubar {
  width: 483px;
  padding: 0 0 2px 28px;
  display: flex;
  align-items: center;
  gap: 16px;
  font-size: 14px;
  border-right: 2px solid #999;
}
.pin { width: 14px; height: 14px; margin-left: 5px; }
.quick { display: flex; align-items: center; gap: 6px; padding-left: 17px; flex: 1; }
.quick button { display: flex; align-items: center; gap: 7px; }
.quick button + button { margin-left: 1px; }
.select { height: 26px; border: 1px solid #888; padding-right: 4px; }
.select span { background: #b0b0b0; height: 24px; padding: 2px 3px; }
.quick .select { gap: 4px; }
.doc { width: 13px; font-size: 14px; line-height: 28px; overflow: hidden; white-space: nowrap; }

/* ribbon */
.ribbon {
  flex: none;
  height: 87px;
  display: flex;
  padding: 6px 0 2px 5px;
  background: #f6f6f6;
  border-bottom: 1px solid #858585;
  font-size: 14px;
  line-height: 19px;
}
.cmd {
  flex: none;
  display: flex;
  flex-direction: column;
  align-items: center;
  padding: 13px 5px 0;
}
.cmd > span { margin-top: 1px; white-space: nowrap; }
.drop { padding-top: 6px; }
.drop .caret { margin-top: 21px; }
.short { width: 52px; }
.tight { padding-left: 2px; padding-right: 2px; }
.ribbon hr { width: 1px; margin: 0 1px; border: 0; background: #c4c4c4; }
.on { width: 72px; background: #b0b0b0; border: 1px solid #777; padding: 12px 0 0; }

/* left side */
.work { flex: 1; min-height: 0; display: flex; }
.side {
  flex: none;
  width: 413px;
  display: flex;
  flex-direction: column;
  min-height: 0;
  background: #f6f6f6;
  border-right: 1px solid #858585;
}
.tabs { height: 28px; display: flex; flex: none; background: #fcfcfc; border-bottom: 1px solid #858585; }
.tabs button { padding: 0 12px 2px; color: #222; background: #d4d4d4; border-right: 1px solid #858585; white-space: nowrap; }
.tabs button:nth-child(n+2) { min-width: 56px; }
.tabs button.cur { width: 66px; padding: 0 8px 2px 10px; background: #f6f6f6; color: #444; }
.tabs button:last-child { padding: 0 10px 2px; }
.tabs button:nth-child(n+2):not(:last-child) { width: 56px; }
.strip { height: 4px; flex: none; background: #e3e8f5; border-bottom: 1px solid #c4c4c4; margin-right: 2px; }
.strip span { display: block; width: 50px; height: 2px; margin-left: 129px; background: #fbcb6b; }
.grip { height: 21px; flex: none; border-bottom: 1px solid #c4c4c4; padding: 7px 0 0 203px; margin-right: 2px; }
.grip span { display: block; width: 6px; height: 6px; border: 1px solid #999; background: #ccc; border-radius: 50%; }
.ptabs { display: flex; height: 30px; padding: 4px 8px 0 4px; flex: none; align-items: stretch; }
.ptabs button { width: 40px; padding: 3px 11px; background: #d4d4d4; border: 1px solid #999; border-left: 0; }
.ptabs button.cur { background: #f6f6f6; border-bottom: 0; }
.more { width: 8px; height: 12px; margin: 6px 0 0 auto; }
.treewrap { flex: 1; min-height: 0; display: flex; padding-top: 1px; }
.edge {
  width: 3px;
  flex: none;
  border-right: 1px solid #aaa;
  background: repeating-linear-gradient(#f6f6f6 0 12px, #d8b03a 12px 16px, #f6f6f6 16px 24px);
}
.treecol { flex: 1; min-width: 0; display: flex; flex-direction: column; }
.filter {
  flex: none;
  height: 31px;
  margin: 0 5px 0 4px;
  padding: 0 2px;
  display: flex;
  align-items: center;
  border: 1px solid #c4c4c4;
}
.filter .caret { margin-top: 6px; }
.treebox { display: flex; flex: 1; min-height: 0; padding-right: 2px; border-right: 1px solid #c4c4c4; margin-right: 2px; }
.scrollbar { width: 18px; flex: none; border-left: 1px solid #bbb; background: linear-gradient(90deg, #f2f2f2, #d2d2d4 60%, #e4e4e4); }
.tree { flex: 1; min-width: 0; list-style: none; margin: 0; padding: 0; line-height: 22px; white-space: nowrap; overflow: hidden; }
.tree li { height: 24px; display: flex; align-items: center; padding-left: 27px; }
.tree .ic { margin-right: 4px; }
.tree .root { padding-left: 4px; }
.tree .sub { padding-left: 50px; }
.tw {
  width: 0;
  height: 0;
  border: 4px solid transparent;
  border-left: 5px solid #666;
  border-right: 0;
}
.tree .tw { margin: 0 13px 0 -18px; }
.tree .tw.open { border: 4px solid transparent; border-top: 5px solid #666; border-bottom: 0; margin: 0 10px 0 -18px; }
.sel span { flex: 1; height: 24px; display: flex; align-items: center; background: #a6c9e5; border: 1px solid #3f86b5; margin-left: -4px; padding-left: 3px; }

/* viewport */
.view { flex: 1; min-width: 0; display: flex; flex-direction: column; overflow: hidden; }
.hud { flex: none; height: 30px; display: flex; align-items: center; justify-content: flex-end; gap: 8px; margin-right: -3px; opacity: .85; }
.scene { width: 100%; display: block; }

/* floating toolbar and menu */
.minibar, .menu {
  position: absolute;
  left: 253px;
  width: 312px;
  background: #f6f6f6;
  border: 1px solid #858585;
  box-shadow: 4px 4px 2px -1px #999;
}
.minibar { top: 233px; height: 68px; padding: 9px 8px; display: flex; flex-direction: column; gap: 12px; }
.minibar div { display: flex; align-items: center; gap: 12px; }
.minibar .wide { margin-right: -1px; }
.minibar .caret { margin: 0 -2px 0 -3px; }
.menu { top: 311px; padding-top: 3px; }
.menu button {
  width: 100%;
  height: 25px;
  display: flex;
  align-items: center;
  padding: 0 0 2px 45px;
  position: relative;
  white-space: pre;
  text-align: left;
}
.menu .tall-row { height: 26px; }
.menu button .ic { margin: 0 20px 0 -38px; }
.menu .tw { margin: 0 14px 0 auto; }
.menu u { text-underline-offset: 2px; }
.menu h2 {
  margin: 0;
  height: 25px;
  padding-left: 3px;
  font-size: 15px;
  line-height: 23px;
  border: 1px solid #c4c4c4;
  border-width: 1px 0;
}
.menu hr { margin: 1px 0 0 39px; border: 0; height: 1px; background: #c4c4c4; }
.menu button.hot { width: 300px; margin-left: 3px; padding-left: 41px; background: #fff; border: 1px solid #aaa; }
.mark { position: absolute; left: -7px; top: -5px; width: 268px; height: 34px; border: 5px solid #ed1c24; }
```
